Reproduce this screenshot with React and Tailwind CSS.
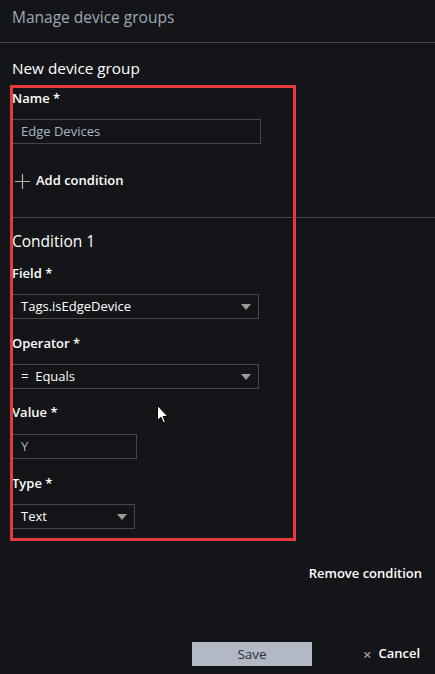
const FONT = { fontFamily: '"Open Sans", "Noto Sans", sans-serif' };

const Label = ({ children, className = '' }) => (
  <div className={`h-5 flex items-center text-[13px] font-semibold text-white ${className}`}>{children}</div>
);

const Caret = () => (
  <svg width="10" height="6" viewBox="0 0 10 6" className="shrink-0">
    <path d="M0 0 L10 0 L5 6 Z" fill="#9a9a9a" />
  </svg>
);

const Select = ({ value, width, className = '' }) => (
  <div className={`h-[25px] ${width} border border-[#474747] flex items-center justify-between pl-[8px] pr-[7px] text-[13px] text-white ${className}`}>
    <span>{value}</span>
    <Caret />
  </div>
);

const Input = ({ value, width, className = '' }) => (
  <div className={`h-[25px] ${width} border border-[#474747] flex items-center pl-[8px] text-[13px] text-[#a9b7c8] ${className}`}>
    {value}
  </div>
);

const App = () => {
  return (
    <div className="relative w-[435px] h-[674px] bg-[#141518] overflow-hidden" style={FONT}>
      <div className="h-[43px] border-b border-[#474747] flex items-center pl-3 pb-[6px]">
        <span className="text-[15.5px] text-[#9ea8b5]">Manage device groups</span>
      </div>

      <div className="pl-3">
        <div className="mt-[15px] h-5 flex items-center text-[15.3px] text-white">New device group</div>

        <Label className="mt-[11px]">Name *</Label>
        <Input value="Edge Devices" width="w-[249px]" className="mt-[10px]" />

        <div className="mt-[27px] h-5 flex items-center gap-[6px] text-[13px] font-semibold text-white">
          <svg width="15" height="15" viewBox="0 0 15 15" className="ml-[3px]">
            <path d="M7.5 0 V15 M0 7.5 H15" stroke="#b5b5b5" strokeWidth="1.2" />
          </svg>
          <span>Add condition</span>
        </div>

        <div className="mt-[26px] h-px bg-[#474747]" />

        <div className="mt-[13px] h-[22px] flex items-center text-[15.5px] text-white">Condition 1</div>

        <Label className="mt-[11px]">Field *</Label>
        <Select value="Tags.isEdgeDevice" width="w-[247px]" className="mt-[10px]" />

        <Label className="mt-[15px]">Operator *</Label>
        <Select value="=  Equals" width="w-[247px]" className="mt-[10px] whitespace-pre" />

        <Label className="mt-[14px]">Value *</Label>
        <Input value="Y" width="w-[125px]" className="mt-[11px]" />

        <Label className="mt-[15px]">Type *</Label>
        <Select value="Text" width="w-[123px]" className="mt-[10px]" />

        <div className="mt-[35px] h-5 flex items-center justify-end pr-[13px] text-[13px] font-semibold text-white">
          Remove condition
        </div>

        <div className="mt-[58px] flex items-center">
          <div className="ml-[180px] w-[120px] h-[24px] bg-[#b2b9c5] flex items-center justify-center text-[13.5px] text-[#2a2e34]">Save</div>
          <div className="ml-[51px] flex items-center gap-[7px] text-[13px] font-semibold text-white">
            <span className="text-[#a0a0a0] text-[15px] leading-none">×</span>
            <span>Cancel</span>
          </div>
        </div>
      </div>

      {/* highlight annotation */}
      <div className="absolute left-[10px] top-[85px] w-[286px] h-[456px] border-[3px] border-[#e8393f] pointer-events-none" />

      {/* mouse cursor */}
      <svg className="absolute left-[157px] top-[405px]" width="12" height="19" viewBox="0 0 12 19">
        <path d="M0.5 0.5 L0.5 15.5 L4 12.3 L6.3 17.8 L8.4 16.9 L6.1 11.5 L10.8 11.5 Z" fill="#fff" stroke="#000" strokeWidth="1" />
      </svg>
    </div>
  );
};

export default App;
